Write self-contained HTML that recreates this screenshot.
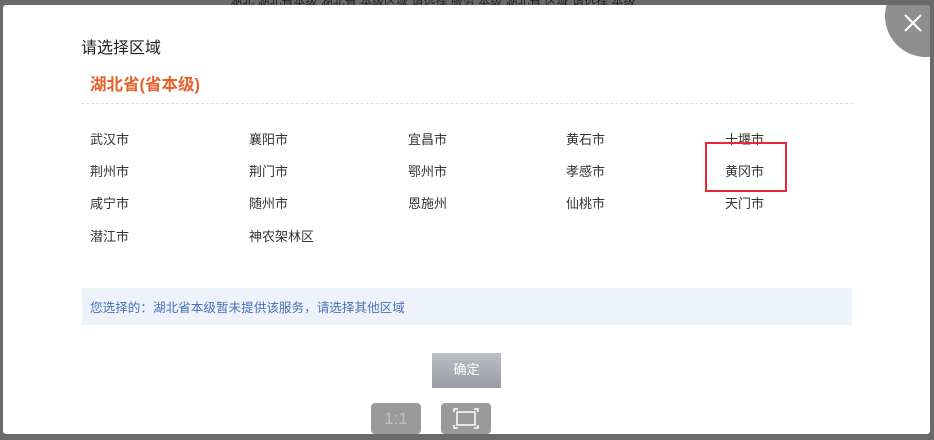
<!DOCTYPE html>
<html><head><meta charset="utf-8"><style>
body{margin:0;width:934px;height:440px;overflow:hidden;background:#6a6a6a;font-family:"Liberation Sans","Noto Sans CJK SC",sans-serif;position:relative}
.dlg{position:absolute;left:3px;top:5px;width:927px;height:429px;background:#fff;border-radius:3px;overflow:hidden}
.t{position:absolute;font-size:13px;color:#333;white-space:nowrap}
</style></head><body>
<div style="position:absolute;left:230px;top:-8px;color:#222;font-size:12px">湖北 湖北省本级 湖北省 本级区域 请选择 服务 本级 湖北省 区域 请选择 本级</div>
<div class="dlg">
<div style="position:absolute;left:882px;top:-30px;width:82px;height:82px;border-radius:50%;background:#8e8e8e"></div>
<svg style="position:absolute;left:900px;top:8px" width="20" height="20"><path d="M2 2L18 18M18 2L2 18" stroke="#fff" stroke-width="2"/></svg>
<div class="t" style="left:78px;top:29px;font-size:16px;color:#222">请选择区域</div>
<div class="t" style="left:87px;top:66px;font-size:16.5px;color:#e8602c;font-weight:bold">湖北省(省本级)</div>
<div style="position:absolute;left:78px;top:98px;width:772px;border-top:1px dashed #ddd"></div>
<div class="t" style="left:87px;top:124px">武汉市</div><div class="t" style="left:246px;top:124px">襄阳市</div><div class="t" style="left:405px;top:124px">宜昌市</div><div class="t" style="left:563px;top:124px">黄石市</div><div class="t" style="left:722px;top:124px">十堰市</div>
<div class="t" style="left:87px;top:156px">荆州市</div><div class="t" style="left:246px;top:156px">荆门市</div><div class="t" style="left:405px;top:156px">鄂州市</div><div class="t" style="left:563px;top:156px">孝感市</div><div class="t" style="left:722px;top:156px">黄冈市</div>
<div class="t" style="left:87px;top:188px">咸宁市</div><div class="t" style="left:246px;top:188px">随州市</div><div class="t" style="left:405px;top:188px">恩施州</div><div class="t" style="left:563px;top:188px">仙桃市</div><div class="t" style="left:722px;top:188px">天门市</div>
<div class="t" style="left:87px;top:221px">潜江市</div><div class="t" style="left:246px;top:221px">神农架林区</div>
<div style="position:absolute;left:702px;top:137px;width:78px;height:46px;border:2px solid #e8283a"></div>
<div style="position:absolute;left:79px;top:283px;width:770px;height:37px;background:#eef2fb"></div>
<div class="t" style="left:87px;top:292px;color:#4a70b8;font-size:12.6px">您选择的：湖北省本级暂未提供该服务，请选择其他区域</div>
<div style="position:absolute;left:429px;top:348px;width:69px;height:35px;background:linear-gradient(#bcc0c6,#989ba1);color:#fff;font-size:13px;text-align:center;line-height:33px">确定</div>
<div style="position:absolute;left:368px;top:398px;width:50px;height:31px;background:#9a9a9a;border-radius:4px;color:#bdbdbd;font-size:17px;text-align:center;line-height:31px">1:1</div>
<div style="position:absolute;left:438px;top:398px;width:50px;height:31px;background:#9a9a9a;border-radius:4px"><svg width="50" height="31"><path d="M13 9V6h4M33 6h4v3M37 22v3h-4M17 25h-4v-3" stroke="#fff" fill="none" stroke-width="1.5"/><rect x="16" y="9" width="18" height="13" stroke="#fff" fill="none" stroke-width="1.5"/></svg></div>
</div>
</body></html>
